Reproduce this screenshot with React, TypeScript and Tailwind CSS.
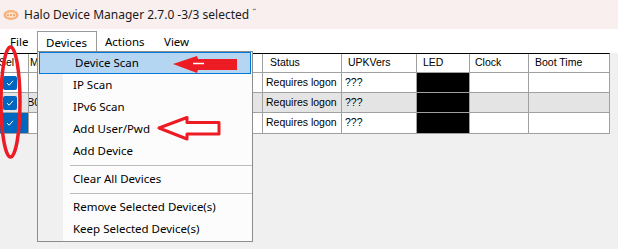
import React from 'react';

const rows = [
  { mac: '', odd: false, focused: false },
  { mac: 'B0', odd: true, focused: false },
  { mac: '', odd: false, focused: true },
];

const menuItems: (string | null)[] = [
  'Device Scan',
  'IP Scan',
  'IPv6 Scan',
  'Add User/Pwd',
  'Add Device',
  null,
  'Clear All Devices',
  null,
  'Remove Selected Device(s)',
  'Keep Selected Device(s)',
];

function Check() {
  return (
    <div className="w-[14px] h-[14px] rounded-[2px] bg-[#0067c0] flex items-center justify-center">
      <svg width="10" height="10" viewBox="0 0 10 10">
        <path d="M2 5.2 L4.2 7.2 L8 2.8" stroke="white" strokeWidth="1" fill="none" />
      </svg>
    </div>
  );
}

function AppIcon() {
  return (
    <svg width="16" height="12" viewBox="0 0 16 12">
      <ellipse cx="8" cy="6" rx="7.5" ry="5" fill="#f6b27a" />
      <ellipse cx="8" cy="6" rx="5" ry="2.8" fill="#fbe3cf" />
      <circle cx="5" cy="6" r="1" fill="#f39a52" />
      <circle cx="8" cy="6" r="1" fill="#f39a52" />
      <circle cx="11" cy="6" r="1" fill="#f39a52" />
    </svg>
  );
}

export default function App() {
  return (
    <div className="relative w-[618px] h-[249px] overflow-hidden bg-[#f0f0f0] font-['Segoe_UI','Noto_Sans',sans-serif] text-black">
      {/* title bar */}
      <div className="h-[29px] bg-[#f9efef] flex items-center pl-[3px] gap-[5px]">
        <AppIcon />
        <span className="text-[12px] text-[#1a1a1a]">Halo Device Manager 2.7.0 -3/3 selected <span className="text-[9px] align-top text-[#555]">˝</span></span>
      </div>

      {/* menu bar */}
      <div className="h-[24px] bg-white flex items-end text-[11.5px]">
        <div className="w-[37px] h-[22px] flex items-center pl-[10px]">File</div>
        <div className="w-[60px] h-[22px] flex items-center pl-[8px] border border-b-0 border-[#999]">Devices</div>
        <div className="h-[22px] flex items-center pl-[8px] w-[59px]">Actions</div>
        <div className="h-[22px] flex items-center pl-[8px]">View</div>
      </div>

      {/* grid */}
      <div className="flex">
        <div className="w-[610px] border-t border-t-black border-r border-b border-[#a0a0a0] bg-white font-['Liberation_Sans',Arial,sans-serif] text-[10.5px]">
          <div className="flex h-[19px] border-b border-[#a0a0a0] text-[10.5px]">
            <div className="w-[29px] border-r border-[#a0a0a0] flex items-center overflow-hidden"><span className="ml-[-1px]">Sel</span></div>
            <div className="w-[234px] border-r border-[#a0a0a0] flex items-center pl-[1px]">MAC</div>
            <div className="w-[79px] border-r border-[#a0a0a0] flex items-center pl-[7px]">Status</div>
            <div className="w-[75px] border-r border-[#a0a0a0] flex items-center pl-[6px]">UPKVers</div>
            <div className="w-[53px] border-r border-[#a0a0a0] flex items-center pl-[6px]">LED</div>
            <div className="w-[59px] border-r border-[#a0a0a0] flex items-center pl-[5px]">Clock</div>
            <div className="flex-1 flex items-center pl-[6px]">Boot Time</div>
          </div>
          {rows.map((r, i) => (
            <div key={i} className={`flex h-[20px] ${i < 2 ? 'border-b border-[#a0a0a0]' : ''} ${r.odd ? 'bg-[#e4e4e4]' : 'bg-white'}`}>
              <div className={`w-[29px] border-r border-[#a0a0a0] flex items-center pl-[3px] ${r.focused ? 'bg-[#0067c0]' : ''}`}>
                <div className="w-[14px]"><Check /></div>
              </div>
              <div className="w-[234px] border-r border-[#a0a0a0] flex items-center text-[11px] overflow-hidden"><span className="ml-[-2px]">{r.mac}</span></div>
              <div className="w-[79px] border-r border-[#a0a0a0] flex items-center pl-[3px]">Requires logon</div>
              <div className="w-[75px] border-r border-[#a0a0a0] flex items-center pl-[3px]">???</div>
              <div className="w-[53px] border-r border-[#a0a0a0] bg-black"></div>
              <div className="w-[59px] border-r border-[#a0a0a0]"></div>
              <div className="flex-1"></div>
            </div>
          ))}
        </div>
      </div>

      {/* Devices dropdown */}
      <div className="absolute left-[37px] top-[51px] w-[216px] h-[191px] border border-[#8c8c8c] bg-[#fcfcfc] flex text-[11.5px]">
        <div className="absolute left-0 top-0 bottom-0 w-[25px] bg-[#f0f0f0]" />
        <div className="relative flex-1 flex flex-col">
          {menuItems.map((m, i) =>
            m === null ? (
              <div key={i} className="h-[6px] flex items-center pl-[32px]">
                <div className="h-px flex-1 bg-[#bdbdbd]" />
              </div>
            ) : (
              <div
                key={i}
                className={`h-[22px] flex items-center pl-[35px] ${i === 0 ? 'mx-px bg-[#b5d6f3] border border-[#0078d7] pl-[34px]' : ''}`}
              >
                {m}
              </div>
            )
          )}
        </div>
      </div>

      {/* red annotations */}
      <svg className="absolute left-0 top-0 pointer-events-none" width="618" height="249">
        <ellipse cx="10.5" cy="102" rx="9.5" ry="55" fill="none" stroke="#ed1c24" strokeWidth="3.5" />
        <path d="M173 64 L197 56 L198 59 L237 59 L237 70 L198 70 L197 73 Z" fill="#ed1c24" />
        <path d="M193 63.5 L204 63.5" stroke="white" strokeWidth="1.5" />
        <path d="M159 128 L187 117.5 L187 122.5 L219 122.5 L219 134 L187 134 L187 139 Z" fill="white" stroke="#ed1c24" strokeWidth="3" strokeLinejoin="round" />
      </svg>
    </div>
  );
}
